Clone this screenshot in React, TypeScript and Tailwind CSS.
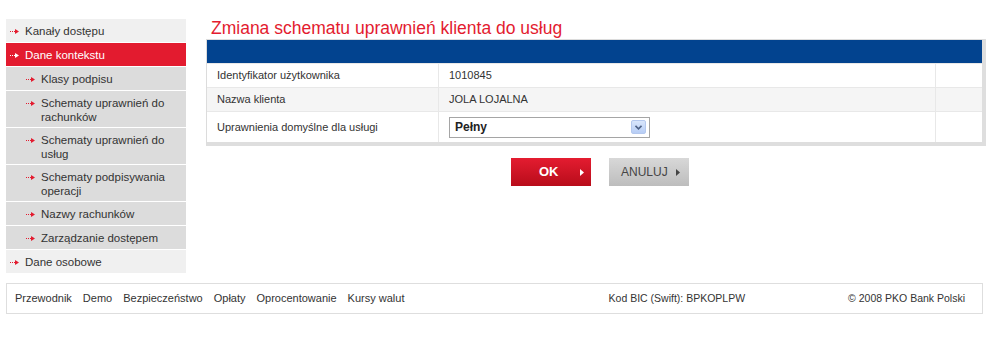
import { ReactNode } from "react";

const font = { fontFamily: '"Liberation Sans", Arial, sans-serif' };

function Arrow({ white }: { white?: boolean }) {
  const c = white ? "#ffffff" : "#e31b2f";
  return (
    <svg width="9" height="5" viewBox="0 0 9 5" className="shrink-0">
      <rect x="0" y="2" width="1" height="1" fill={c} />
      <rect x="2" y="2" width="1" height="1" fill={c} />
      <rect x="4" y="2" width="2" height="1" fill={c} />
      <polygon points="5,0 9,2.5 5,5" fill={c} />
    </svg>
  );
}

type Item = { label: ReactNode; sub?: boolean; active?: boolean };

const menu: Item[] = [
  { label: "Kanały dostępu" },
  { label: "Dane kontekstu", active: true },
  { label: "Klasy podpisu", sub: true },
  { label: "Schematy uprawnień do rachunków", sub: true },
  { label: "Schematy uprawnień do usług", sub: true },
  { label: "Schematy podpisywania operacji", sub: true },
  { label: "Nazwy rachunków", sub: true },
  { label: "Zarządzanie dostępem", sub: true },
  { label: "Dane osobowe" },
];

function Sidebar() {
  return (
    <nav className="w-[180px] flex flex-col gap-px shrink-0">
      {menu.map((m, i) => (
        <div
          key={i}
          className={`min-h-[23px] pt-[5px] pb-[3px] pr-[8px] flex items-start text-[11.5px] leading-[14px] ${
            m.active
              ? "bg-[#e31b2f] text-white"
              : m.sub
              ? "bg-[#dcdcdc] text-[#333]"
              : "bg-[#f0f0f0] text-[#333]"
          } ${m.sub ? "pl-[20px]" : "pl-[4px]"}`}
        >
          <span className="h-[14px] w-[15px] shrink-0 flex items-center">
            <Arrow white={m.active} />
          </span>
          <span>{m.label}</span>
        </div>
      ))}
    </nav>
  );
}

function Select() {
  return (
    <div className="w-[201px] h-[21px] border border-[#a5a5a5] bg-white flex items-center justify-between pl-[5px] pr-[3px]">
      <span className="font-bold text-[12px] text-[#222]">Pełny</span>
      <span className="w-[15px] h-[14px] rounded-[2px] bg-gradient-to-b from-[#d9e6fb] to-[#b7cdf5] border border-[#b4c8ee] flex items-center justify-center">
        <svg width="7" height="5" viewBox="0 0 7 5">
          <polyline points="0.5,0.8 3.5,3.8 6.5,0.8" fill="none" stroke="#4d6185" strokeWidth="1.6" />
        </svg>
      </span>
    </div>
  );
}

function Row({ a, b, grey, tall }: { a: string; b: ReactNode; grey?: boolean; tall?: boolean }) {
  return (
    <div
      className={`grid grid-cols-[232px_497px_1fr] border-t border-[#e8e8e8] ${
        grey ? "bg-[#f5f5f5]" : "bg-white"
      } ${tall ? "h-[31px]" : "h-[24px]"}`}
    >
      <div className="border-r border-[#e8e8e8] pl-[10px] flex items-center">{a}</div>
      <div className="border-r border-[#e8e8e8] pl-[10px] flex items-center">{b}</div>
      <div />
    </div>
  );
}

export default function App() {
  return (
    <div style={font} className="w-[993px] h-[342px] bg-white text-[#333] text-[11px] pt-[19px] px-[6px]">
      <div className="flex gap-[20px]">
        <Sidebar />
        <div className="flex flex-col">
          <h1 className="text-[17.5px] leading-[21px] text-[#e31b2f] pl-[5px] -mt-[1px]">
            Zmiana schematu uprawnień klienta do usług
          </h1>
          <div className="w-[780px] border-l border-t border-[#dcdcdc] border-r-[4px] border-b-[4px] border-r-[#dedede] border-b-[#dedede]">
            <div className="h-[23px] bg-[#02438f]" />
            <Row a="Identyfikator użytkownika" b="1010845" />
            <Row a="Nazwa klienta" b="JOLA LOJALNA" grey />
            <Row a="Uprawnienia domyślne dla usługi" b={<Select />} tall />
          </div>
          <div className="flex justify-center gap-[18px] mt-[12px] pl-[8px]">
            <button className="w-[80px] h-[28px] flex items-center pl-[28px] gap-[21px] font-bold text-[13px] bg-gradient-to-b from-[#e41c30] to-[#b80c1a] text-white">
              <span>OK</span>
              <svg width="4" height="7" viewBox="0 0 4 7">
                <polygon points="0,0 4,3.5 0,7" fill="#ffffff" />
              </svg>
            </button>
            <button className="w-[80px] h-[28px] flex items-center pl-[12px] gap-[8px] text-[12px] bg-gradient-to-b from-[#d8d8d8] to-[#bdbdbd] text-[#454545]">
              <span>ANULUJ</span>
              <svg width="4" height="7" viewBox="0 0 4 7">
                <polygon points="0,0 4,3.5 0,7" fill="#444444" />
              </svg>
            </button>
          </div>
        </div>
      </div>
      <footer className="mt-[10px] w-[977px] h-[31px] border border-[#dedede] flex items-center pl-[8px] pr-[17px]">
        <div className="flex gap-[11px]">
          <span>Przewodnik</span>
          <span>Demo</span>
          <span>Bezpieczeństwo</span>
          <span>Opłaty</span>
          <span>Oprocentowanie</span>
          <span>Kursy walut</span>
        </div>
        <span className="ml-auto text-[10.5px]">Kod BIC (Swift): BPKOPLPW</span>
        <span className="ml-[103px] text-[10.5px]">© 2008 PKO Bank Polski</span>
      </footer>
    </div>
  );
}
